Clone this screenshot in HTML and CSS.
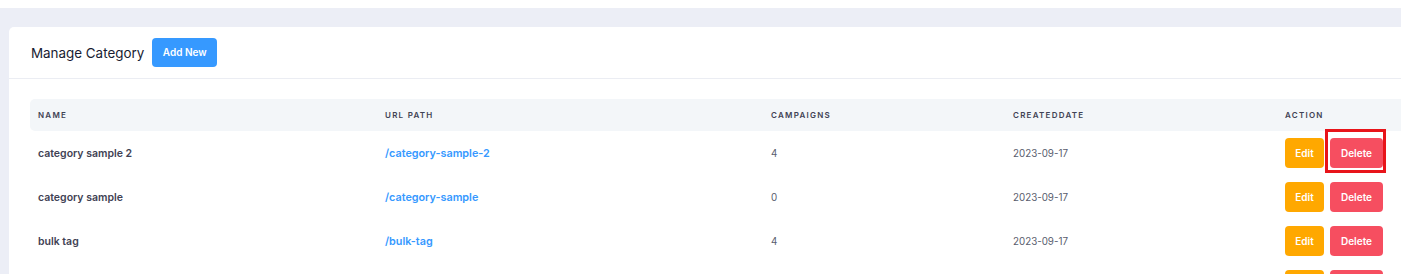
FILE: index.html
```html
<!DOCTYPE html>
<html lang="en">
<head>
    <meta charset="UTF-8">
    <meta name="viewport" content="width=device-width, initial-scale=1.0">
    <title>Manage Category</title>
    <link rel="stylesheet" href="styles.css">
</head>
<body>
    <div class = "topStrip"></div>
    <div class = "page">
        <div class = "card">
            <div class = "cardHeader">
                <span class = "cardTitle">Manage Category</span>
                <a href = "#" class = "btn btnPrimary addBtn">Add New</a>
            </div>
            <div class = "cardBody">
                <table class = "catTable">
                    <tr>
                        <th class = "colName">Name</th>
                        <th class = "colUrl">Url Path</th>
                        <th class = "colCount">Campaigns</th>
                        <th class = "colDate">CreatedDate</th>
                        <th class = "colAction">Action</th>
                    </tr>
                    <tr>
                        <td class = "nameCell">category sample 2</td>
                        <td><a href = "#" class = "urlLink">/category-sample-2</a></td>
                        <td>4</td>
                        <td>2023-09-17</td>
                        <td>
                            <div class = "actions">
                                <a href = "#" class = "btn btnEdit">Edit</a>
                                <span class = "marked">
                                    <a href = "#" class = "btn btnDelete">Delete</a>
                                    <span class = "markBox"></span>
                                </span>
                            </div>
                        </td>
                    </tr>
                    <tr>
                        <td class = "nameCell">category sample</td>
                        <td><a href = "#" class = "urlLink">/category-sample</a></td>
                        <td>0</td>
                        <td>2023-09-17</td>
                        <td>
                            <div class = "actions">
                                <a href = "#" class = "btn btnEdit">Edit</a>
                                <a href = "#" class = "btn btnDelete">Delete</a>
                            </div>
                        </td>
                    </tr>
                    <tr>
                        <td class = "nameCell">bulk tag</td>
                        <td><a href = "#" class = "urlLink">/bulk-tag</a></td>
                        <td>4</td>
                        <td>2023-09-17</td>
                        <td>
                            <div class = "actions">
                                <a href = "#" class = "btn btnEdit">Edit</a>
                                <a href = "#" class = "btn btnDelete">Delete</a>
                            </div>
                        </td>
                    </tr>
                    <tr>
                        <td class = "nameCell"></td>
                        <td></td>
                        <td></td>
                        <td></td>
                        <td>
                            <div class = "actions">
                                <a href = "#" class = "btn btnEdit"></a>
                                <a href = "#" class = "btn btnDelete"></a>
                            </div>
                        </td>
                    </tr>
                </table>
            </div>
        </div>
    </div>
</body>
</html>
```

FILE: styles.css
```css
body {
    margin: 0;
    font-family: Inter, "Open Sans", sans-serif;
    color: #595d6e;
    background-color: #eceef6;
    overflow: hidden;
}

.topStrip {
    height: 8px;
    background-color: #ffffff;
}

.page {
    padding: 19px 0 0 9px;
}

.card {
    width: 1430px;
    background-color: #ffffff;
    border-radius: 5px 0 0 0;
}

.cardHeader {
    display: flex;
    align-items: center;
    gap: 8px;
    height: 51px;
    padding: 0 21px 0 22px;
    border-bottom: 1px solid #ebedf3;
}

.cardTitle {
    font-size: 13.4px;
    color: #181c32;
}

.btn {
    display: inline-flex;
    align-items: center;
    justify-content: center;
    height: 30px;
    border-radius: 4px;
    color: #ffffff;
    font-size: 10px;
    font-weight: 600;
    text-decoration: none;
}

.btnPrimary {
    background-color: #3699ff;
}

.addBtn {
    width: 65px;
    height: 29px;
    margin-top: -1px;
}

.btnEdit {
    width: 39px;
    background-color: #ffa800;
}

.btnDelete {
    width: 53px;
    background-color: #f64e60;
}

.cardBody {
    padding: 20px 21px;
}

.catTable {
    width: 1388px;
    border-collapse: collapse;
    table-layout: fixed;
}

th {
    height: 32px;
    padding: 0 8px;
    background-color: #f3f6f9;
    text-align: left;
    text-transform: uppercase;
    font-size: 8px;
    font-weight: 600;
    letter-spacing: 1.25px;
    color: #3f4254;
}

th:first-child {
    border-radius: 5px 0 0 5px;
}

.colName { width: 331px; }
.colUrl { width: 370px; }
.colCount { width: 226px; }
.colDate { width: 256px; }

td {
    height: 44px;
    padding: 0 8px;
    font-size: 9.8px;
    color: #595d6e;
}

.nameCell {
    font-size: 10.5px;
    font-weight: 600;
    color: #3f4254;
}

.urlLink {
    font-size: 10.8px;
    color: #3699ff;
    font-weight: 600;
    text-decoration: none;
}

.actions {
    display: flex;
    gap: 6px;
}

.marked {
    position: relative;
    display: inline-flex;
}

/* red highlight drawn over the delete button */
.markBox {
    position: absolute;
    left: -5px;
    top: -9px;
    right: -3px;
    bottom: -5px;
    border: 3px solid #e8141a;
    pointer-events: none;
}
```
